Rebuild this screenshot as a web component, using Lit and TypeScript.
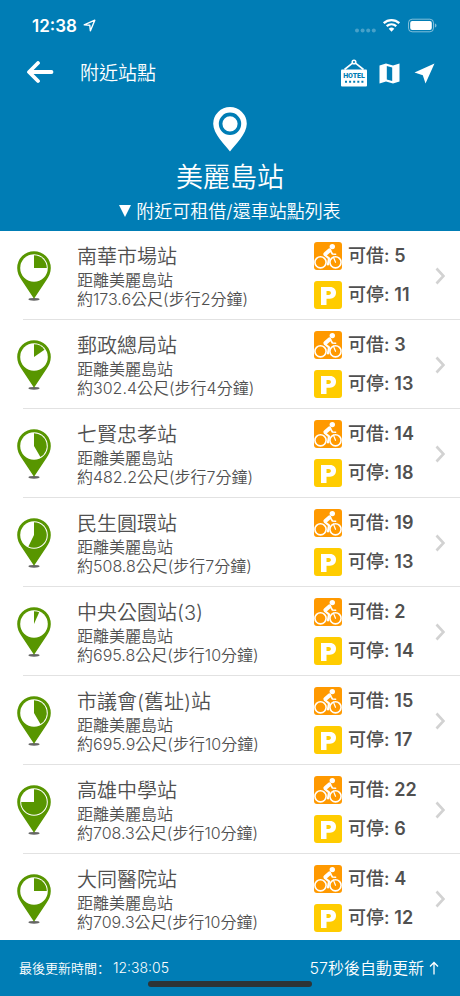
import { LitElement, html, svg, css } from "lit";
import { customElement, property } from "lit/decorators.js";

interface Station {
  name: string;
  metres: string;
  minutes: number;
  bikes: number;
  docks: number;
  angle: number;
}

const ORIGIN = "美麗島站";

const STATIONS: Station[] = [
  { name: "南華市場站", metres: "173.6", minutes: 2, bikes: 5, docks: 11, angle: 90 },
  { name: "郵政總局站", metres: "302.4", minutes: 4, bikes: 3, docks: 13, angle: 55 },
  { name: "七賢忠孝站", metres: "482.2", minutes: 7, bikes: 14, docks: 18, angle: 150 },
  { name: "民生圓環站", metres: "508.8", minutes: 7, bikes: 19, docks: 13, angle: 206 },
  { name: "中央公園站(3)", metres: "695.8", minutes: 10, bikes: 2, docks: 14, angle: 24 },
  { name: "市議會(舊址)站", metres: "695.9", minutes: 10, bikes: 15, docks: 17, angle: 150 },
  { name: "高雄中學站", metres: "708.3", minutes: 10, bikes: 22, docks: 6, angle: 270 },
  { name: "大同醫院站", metres: "709.3", minutes: 10, bikes: 4, docks: 12, angle: 90 },
];

/** Map pin whose dial shows the share of bikes at a station. */
@customElement("station-pin")
class StationPin extends LitElement {
  @property({ type: Number }) angle = 0;

  static styles = css`
    :host { display: block; }
    .pin { display: block; width: 34px; height: 50px; }
  `;

  render() {
    const r = 12.8;
    const a = (this.angle * Math.PI) / 180;
    const x = (17 + r * Math.sin(a)).toFixed(2);
    const y = (17 - r * Math.cos(a)).toFixed(2);
    const wedge = `M17 17V${17 - r}A${r} ${r} 0 ${this.angle > 180 ? 1 : 0} 1 ${x} ${y}Z`;
    return html`<svg class="pin" viewBox="0 0 34 50" aria-hidden="true">
      <ellipse cx="17" cy="48.3" rx="5.6" ry="1.4" fill="#666" />
      <path fill="#589600" d="M17 .2A16.8 16.8 0 0 1 33.8 17C33.8 21.5 32 25.5 29.5 29L17 47.8 4.5 29C2 25.5 .2 21.5 .2 17A16.8 16.8 0 0 1 17 .2Z" />
      <circle cx="17" cy="17" r="13.8" fill="#fff" />
      ${svg`<path fill="#589600" d=${wedge} />`}
    </svg>`;
  }
}

@customElement("station-row")
class StationRow extends LitElement {
  @property({ attribute: false }) station!: Station;

  static styles = css`
    :host { display: block; }
    .row {
      box-sizing: border-box;
      display: flex;
      align-items: center;
      height: 88px;
      padding: 1px 15px 0 17px;
      color: #505050;
      text-decoration: none;
    }
    .info { flex: 1; min-width: 0; margin-left: 26px; }
    .name { margin: 0; font-size: 20px; line-height: 28px; font-weight: 350; }
    .detail { margin: 0; font-size: 16px; line-height: 19px; font-weight: 350; white-space: nowrap; }
    .counts { display: grid; gap: 11px; width: 121px; }
    .count { display: flex; align-items: center; gap: 6px; font-size: 18px; line-height: 28px; font-weight: 500; white-space: nowrap; }
    .count b { font-weight: 600; }
    .badge { width: 28px; height: 28px; flex: none; }
    .chevron { width: 10px; height: 18px; flex: none; }
  `;

  render() {
    const s = this.station;
    return html`<a class="row" href="#">
      <station-pin .angle=${s.angle}></station-pin>
      <div class="info">
        <h2 class="name">${s.name}</h2>
        <p class="detail">距離${ORIGIN}</p>
        <p class="detail">約${s.metres}公尺(步行${s.minutes}分鐘)</p>
      </div>
      <div class="counts">
        <div class="count">
          <svg class="badge" viewBox="0 0 28 28" aria-hidden="true">
            <rect width="28" height="28" rx="3" fill="#ff9900" />
            <g fill="none" stroke="#fff" stroke-linecap="round" stroke-linejoin="round">
              <circle cx="6.5" cy="20.3" r="5.6" stroke-width="1.6" />
              <circle cx="21.5" cy="20.3" r="5.6" stroke-width="1.6" />
              <path stroke-width="1.2" d="M21.5 20.3L19.4 15" />
              <path stroke-width="4" d="M15.4 8.4L11.4 12" />
              <path stroke-width="2.2" d="M10.8 13L15 16.4 14 22.4" />
              <path stroke-width="1.6" d="M16.6 8.8L18.4 12 21.6 12.2" />
            </g>
            <circle cx="18.3" cy="4.6" r="2.7" fill="#fff" />
          </svg>
          <span>可借: <b>${s.bikes}</b></span>
        </div>
        <div class="count">
          <svg class="badge" viewBox="0 0 28 28" aria-hidden="true">
            <rect width="28" height="28" rx="3" fill="#ffcc00" />
            <path fill="#fff" fill-rule="evenodd" d="M7 6H16C20 6 22 8.5 22 11.8C22 15.5 19.5 17.7 16 17.7H12.5V24H7ZM12.5 10V13.9H14.8C16.2 13.9 16.9 13.1 16.9 12C16.9 10.8 16.2 10 14.8 10Z" />
          </svg>
          <span>可停: <b>${s.docks}</b></span>
        </div>
      </div>
      <svg class="chevron" viewBox="0 0 10 18" aria-hidden="true">
        <path d="M1.5 1.5L8.5 9 1.5 16.5" fill="none" stroke="#d2d2d2" stroke-width="2.6" />
      </svg>
    </a>`;
  }
}

@customElement("app-root")
class AppRoot extends LitElement {
  static styles = css`
    :host {
      display: flex;
      flex-direction: column;
      height: 100vh;
      background: #fff;
      font-family: Inter, "Noto Sans CJK TC", sans-serif;
    }
    .header { flex: none; background: #007db5; color: #fff; padding-bottom: 5px; }
    .status {
      display: flex;
      align-items: center;
      height: 51px;
      padding: 0 23px 0 32px;
      font-size: 17px;
      line-height: 20px;
      font-weight: 600;
    }
    .locating { width: 13px; height: 13px; margin-left: 6px; }
    .signal { width: 82px; height: 16px; margin-left: auto; }
    .toolbar { display: flex; align-items: center; height: 44px; padding: 0 25px 0 26px; }
    .title { flex: 1; margin: 2px 0 0 26px; font-size: 19px; line-height: 28px; font-weight: 350; }
    .tool {
      display: block;
      padding: 0;
      border: 0;
      background: none;
      color: inherit;
      line-height: 0;
    }
    .tool.map { margin: 0 14px 0 12px; }
    .arrow { width: 28px; height: 24px; }
    .hotel { width: 26px; height: 28px; }
    .sign { font: 900 7px Roboto, sans-serif; }
    .sheet { width: 21px; height: 21px; }
    .compass { width: 21px; height: 21px; }
    .hero { display: flex; flex-direction: column; align-items: center; padding-top: 12px; }
    .marker { width: 34px; height: 45px; }
    .station { margin: 7px 0 0; font-size: 27px; line-height: 38px; font-weight: 350; }
    .caption { display: flex; align-items: center; gap: 5px; margin: 0; font-size: 18px; line-height: 29px; font-weight: 350; }
    .triangle { width: 12px; height: 13px; }
    .list { flex: 1; min-height: 0; margin: 0; padding: 0; list-style: none; overflow-y: auto; scrollbar-width: none; }
    .item + .item::before { content: ""; display: block; height: 1px; margin-left: 23px; background: #e2e2e2; }
    .footer {
      flex: none;
      display: grid;
      background: #007db5;
      color: #fff;
      height: 56px;
      grid-template-rows: 41px 6px;
    }
    .times { display: flex; justify-content: space-between; align-items: end; padding: 0 21px 0 19px; line-height: 26px; font-weight: 350; }
    .updated { display: flex; gap: 3px; font-family: Inter, "Noto Sans CJK SC", sans-serif; font-size: 13px; }
    .clock { font-size: 14px; }
    .refresh { display: flex; align-items: center; gap: 5px; font-size: 16px; }
    .up { width: 10px; height: 14px; }
    .home { width: 164px; height: 6px; border-radius: 3px; background: #2d3436; justify-self: center; }
  `;

  render() {
    return html`
      <header class="header">
        <div class="status">
          <span>12:38</span>
          <svg class="locating" viewBox="0 0 13 13" aria-hidden="true">
            <path d="M1.2 5.8L11.8 1.2 7.4 11.8 6.8 6.3Z" fill="none" stroke="#fff" stroke-width="1.4" stroke-linejoin="round" />
          </svg>
          <svg class="signal" viewBox="0 0 82 16" aria-hidden="true">
            <g fill="#fff" opacity=".28">
              <circle cx="2" cy="12.5" r="2" /><circle cx="7.6" cy="12.5" r="2" />
              <circle cx="13.2" cy="12.5" r="2" /><circle cx="18.8" cy="12.5" r="2" />
            </g>
            <g fill="none" stroke="#fff" stroke-width="2.3">
              <path d="M28.7 5.1A11.5 11.5 0 0 1 44.3 5.1" />
              <path d="M31.7 8.2A7.3 7.3 0 0 1 41.3 8.2" />
            </g>
            <path fill="#fff" d="M36.5 13.8L33.7 10.7A4.2 4.2 0 0 1 39.3 10.7Z" />
            <rect x="53.5" y="1.2" width="25" height="12.6" rx="3.6" fill="none" stroke="#fff" stroke-opacity=".5" />
            <rect x="55.2" y="2.9" width="21.6" height="9.2" rx="2" fill="#fff" />
            <path fill="#fff" fill-opacity=".5" d="M79.9 5.5C82 6.1 82 8.9 79.9 9.5Z" />
          </svg>
        </div>
        <nav class="toolbar">
          <button class="tool" aria-label="返回">
            <svg class="arrow" viewBox="0 0 28 24">
              <path d="M3.5 11H25.5M12 2L3 11 12 20" fill="none" stroke="#fff" stroke-width="3.8" stroke-linecap="round" stroke-linejoin="round" />
            </svg>
          </button>
          <h1 class="title">附近站點</h1>
          <button class="tool" aria-label="旅館">
            <svg class="hotel" viewBox="0 0 26 28">
              <path d="M3.5 10.5L11.5 4.2M22.5 10.5L14.5 4.2" stroke="#fff" stroke-width="1.6" fill="none" />
              <circle cx="13" cy="3" r="1.8" fill="none" stroke="#fff" stroke-width="1.5" />
              <rect y="10.5" width="26" height="17" rx="1" fill="#fff" />
              <text class="sign" x="13" y="19.2" text-anchor="middle" fill="#007db5">HOTEL</text>
              <path d="M4 22.8H22.5" stroke="#007db5" stroke-width="2" stroke-dasharray="2 2.1" />
            </svg>
          </button>
          <button class="tool map" aria-label="地圖">
            <svg class="sheet" viewBox="0 0 21 21">
              <path fill="#fff" fill-rule="evenodd" d="M.5 2.5L7 .5 14 2.5 20.5 .5V18.5L14 20.5 7 18.5 .5 20.5ZM7.8 3V16.5L13.2 18V4.5Z" />
            </svg>
          </button>
          <button class="tool" aria-label="定位">
            <svg class="compass" viewBox="0 0 21 21">
              <path fill="#fff" d="M20.5 .5L.5 9.6 8.8 12.2 11.5 20.5Z" />
            </svg>
          </button>
        </nav>
        <div class="hero">
          <svg class="marker" viewBox="0 0 34 45" aria-hidden="true">
            <path fill="#fff" d="M17 0A16.8 16.8 0 0 1 33.8 16.8C33.8 27 22 38 17 44.5C12 38 .2 27 .2 16.8A16.8 16.8 0 0 1 17 0Z" />
            <circle cx="17" cy="16.8" r="9.4" fill="#fff" stroke="#007db5" stroke-width="3.6" />
          </svg>
          <h2 class="station">${ORIGIN}</h2>
          <p class="caption">
            <svg class="triangle" viewBox="0 0 12 13" aria-hidden="true"><path fill="#fff" d="M0 0H12L6 12Z" /></svg>
            <span>附近可租借/還車站點列表</span>
          </p>
        </div>
      </header>
      <ul class="list">
        ${STATIONS.map((s) => html`<li class="item"><station-row .station=${s}></station-row></li>`)}
      </ul>
      <footer class="footer">
        <div class="times">
          <span class="updated">最後更新時間：<time class="clock">12:38:05</time></span>
          <span class="refresh">57秒後自動更新
            <svg class="up" viewBox="0 0 10 14" aria-hidden="true">
              <path d="M5 13.5V1.5M1 5.5L5 1.5 9 5.5" fill="none" stroke="#fff" stroke-width="1.3" />
            </svg>
          </span>
        </div>
        <div class="home"></div>
      </footer>
    `;
  }
}
